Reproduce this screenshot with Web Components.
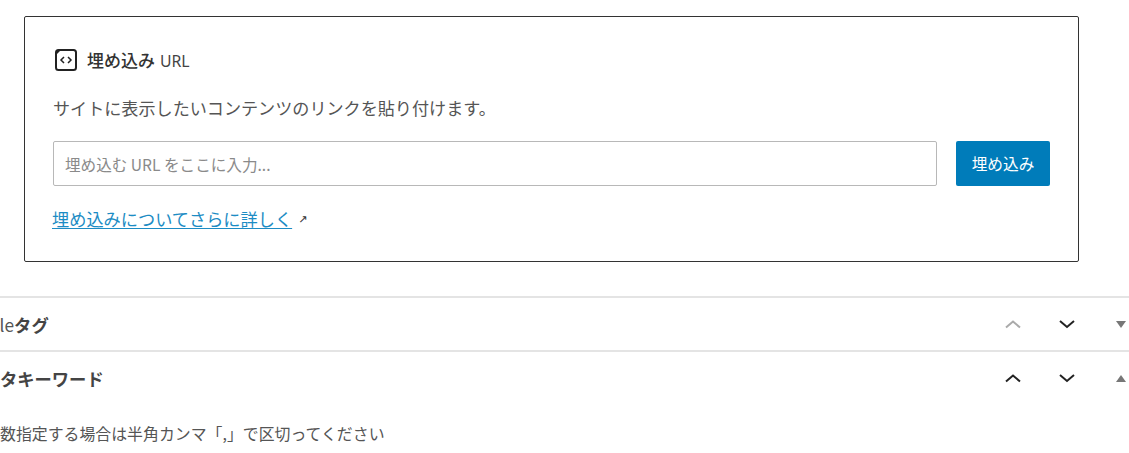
<!DOCTYPE html>
<html lang="ja"><head><meta charset="utf-8">
<style>
html,body{margin:0;padding:0;background:#fff;overflow:hidden}
body{font-family:"Noto Sans CJK JP","Noto Sans",sans-serif;color:#444;width:1129px;height:453px}
</style></head><body>
<embed-card></embed-card>
<meta-panel clip="-22" up="dim" caret="down" style="margin-top:34px"><span style="font-weight:400;color:#555">Title</span>タグ</meta-panel>
<meta-panel clip="-17.3" up="on" caret="up">メタキーワード</meta-panel>
<help-line>複数指定する場合は半角カンマ「,」で区切ってください</help-line>
<script>
class EmbedCard extends HTMLElement{constructor(){super();this.attachShadow({mode:'open'}).innerHTML=`
<style>
:host{display:block;margin:16px 50px 0 24px;box-sizing:border-box;height:246px;border:1px solid #333;border-radius:2px;padding:27px 28px 0 28px;background:#fff}
.title{display:flex;align-items:center;gap:9px;height:32px;padding-left:1px;font-size:17px;color:#333}
.title b{font-weight:500}
.title div{margin-top:-2px}
.title span{font-size:15.8px;font-family:"Noto Sans",sans-serif;color:#444;margin-left:5px}
svg{display:block}
.desc{margin:19px 0 0;font-size:17.1px;line-height:26px;color:#555}
.row{display:flex;margin-top:20px;gap:19px}
.input{flex:0 0 884px;box-sizing:border-box;height:45px;border:1px solid #b8b8b8;border-radius:2px;padding:0 11px;display:flex;align-items:center;font-size:15.6px;color:#8a8a8a}
.btn{width:94px;height:45px;background:#007cba;color:#fff;border-radius:2px;display:flex;align-items:center;justify-content:center;font-size:15.7px}
.link{margin-top:20px;display:flex;align-items:center;gap:6px;font-size:17.2px;line-height:24px;color:#1c8cc4;margin-left:-1px}
.link u{text-underline-offset:2px}
.link i{font-style:normal;font-size:11px;color:#333;font-family:"DejaVu Sans",sans-serif;margin-top:2px}
</style>
<div class="title"><svg width="24" height="24" viewBox="0 0 24 24" fill="none"><rect x="2" y="2" width="20" height="20" rx="2.5" stroke="#222" stroke-width="2"/><path d="M2 7V3.5A1.5 1.5 0 0 1 3.5 2H7z" fill="#222"/><path d="M10 9l-3 3 3 3M14 9l3 3-3 3" stroke="#222" stroke-width="1.5"/></svg><div><b>埋め込み</b><span>URL</span></div></div>
<p class="desc">サイトに表示したいコンテンツのリンクを貼り付けます。</p>
<div class="row"><div class="input">埋め込む URL をここに入力...</div><div class="btn">埋め込み</div></div>
<div class="link"><u>埋め込みについてさらに詳しく</u><i>↗</i></div>`}}
customElements.define('embed-card',EmbedCard);

class MetaPanel extends HTMLElement{constructor(){super();}
connectedCallback(){if(this.shadowRoot)return;
const up=this.getAttribute('up')==='dim'?'#aaa':'#222';
const tri=this.getAttribute('caret')==='down'?'M0 0h10L5 7z':'M0 7h10L5 0z';
this.attachShadow({mode:'open'}).innerHTML=`
<style>
:host{display:block;box-sizing:border-box;height:54px;border-top:2px solid #e4e4e4;overflow:hidden}
.r{display:flex;align-items:center;height:52px}
.t{flex:1;font-size:17.3px;font-weight:700;color:#444;margin-left:${this.getAttribute('clip')}px;white-space:nowrap}
.a{display:flex;align-items:center;gap:30px;margin-right:3px}
svg{display:block}
.tri{margin-left:7px}
</style>
<div class="r"><div class="t"><slot></slot></div>
<div class="a"><svg width="24" height="24" viewBox="0 0 24 24" fill="none"><path d="M5 15.5l7-6 7 6" stroke="${up}" stroke-width="2"/></svg>
<svg width="24" height="24" viewBox="0 0 24 24" fill="none"><path d="M5 9l7 6 7-6" stroke="#222" stroke-width="2"/></svg>
<svg class="tri" width="10" height="7" viewBox="0 0 10 7"><path d="${tri}" fill="#777"/></svg></div></div>`}}
customElements.define('meta-panel',MetaPanel);

class HelpLine extends HTMLElement{constructor(){super();this.attachShadow({mode:'open'}).innerHTML=`
<style>:host{display:block;margin:18px 0 0 -15.9px;font-size:15.9px;line-height:24px;color:#555;white-space:nowrap}</style><slot></slot>`}}
customElements.define('help-line',HelpLine);
</script>
</body></html>
